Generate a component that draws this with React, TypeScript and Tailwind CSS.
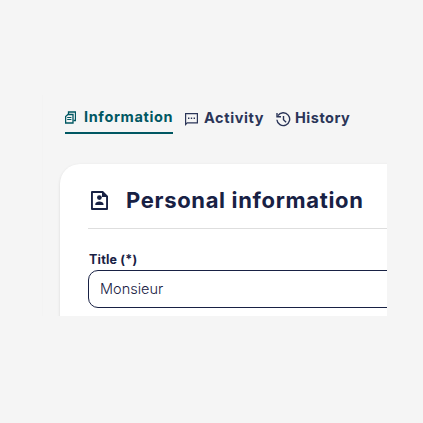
import type { ReactNode } from "react";

interface ITabProps {
  icon: ReactNode;
  label: string;
  className: string;
  labelClassName: string;
}

function CopyIcon() {
  return (
    <svg width="11" height="13" viewBox="0 0 11 13" fill="none" stroke="currentColor" className="shrink-0">
      <path d="M3.5 3V1h7v8.5h-2" strokeWidth="1.3" />
      <path d="M3 3.5h5v8.5H.6V5.5z" strokeWidth="1.3" />
      <path d="M2.2 6.5H6.4M2.2 8.5H6.4" strokeWidth="1" />
    </svg>
  );
}

function MessageIcon() {
  return (
    <svg width="13" height="13" viewBox="0 0 13 13" fill="none" stroke="currentColor" className="relative top-px shrink-0">
      <path d="M.6 11.5V.6h11.8v9.3H2.2z" strokeWidth="1.2" />
      <path d="M3 5.3h1.4M5.8 5.3h1.4M8.6 5.3H10" strokeWidth="1.4" />
    </svg>
  );
}

function HistoryIcon() {
  return (
    <svg width="15" height="15" viewBox="0 0 15 15" fill="none" stroke="currentColor" className="relative top-px shrink-0">
      <path d="M.9 7.8a6.4 6.4 0 1 0 1-4.1" strokeWidth="1.4" />
      <path d="M1 .9v3.9h4" strokeWidth="1.4" />
      <path d="M7.5 4v3.8l2.6 2.5" strokeWidth="1.4" />
    </svg>
  );
}

function ProfileIcon() {
  return (
    <svg width="17" height="19" viewBox="0 0 17 19" fill="currentColor" className="shrink-0">
      <path fillRule="evenodd" d="M0 1Q0 0 1 0H12L17 5V18Q17 19 16 19H1Q0 19 0 18ZM1.9 1.9V17.1H15.1V6H11V1.9Z" />
      <circle cx="8.4" cy="6.6" r="2.4" />
      <path d="M4.3 14v-1c0-1.7 2-2.6 4.1-2.6s4.1.9 4.1 2.6v1z" />
    </svg>
  );
}

function Tab({ icon, label, className, labelClassName }: ITabProps) {
  return (
    <li className={`flex items-center h-8 ${className}`}>
      {icon}
      <span className={`text-[14.5px] leading-5 font-bold whitespace-nowrap ${labelClassName}`}>{label}</span>
    </li>
  );
}

export default function App() {
  return (
    <main className="h-[423px] w-[423px] overflow-hidden bg-[#f5f5f5] pt-[95px] pl-[42px] font-[Inter,sans-serif] text-[#182144]">
      <div className="h-[221px] w-[345px] overflow-hidden border-l border-[#f3f3f3]">
        <ul className="flex pl-[22px] pt-[7px]">
          <Tab
            icon={<CopyIcon />}
            label="Information"
            className="w-[108px] border-b-2 border-[#005762] text-[#005762]"
            labelClassName="ml-2 tracking-[0.62px]"
          />
          <Tab
            icon={<MessageIcon />}
            label="Activity"
            className="ml-3 w-[79px] text-[#2b3558]"
            labelClassName="ml-1.5 tracking-[0.6px]"
          />
          <Tab
            icon={<HistoryIcon />}
            label="History"
            className="ml-3 text-[#2b3558]"
            labelClassName="ml-1 tracking-[0.5px]"
          />
        </ul>

        <section className="mt-[30px] ml-[17px] h-[200px] w-[400px] rounded-tl-[20px] bg-white pl-7 shadow-[0_1px_3px_rgba(0,0,0,0.12)]">
          <header className="flex h-[65px] items-center border-b border-[#dedede] pt-2 pl-[3px]">
            <ProfileIcon />
            <h1 className="ml-[18px] text-[22px] leading-7 font-bold tracking-[0.67px] whitespace-nowrap">
              Personal information
            </h1>
          </header>
          <p className="mt-[23px] pl-px text-[12.5px] leading-4 font-bold tracking-[0.2px]">Title (*)</p>
          <div className="mt-[2px] flex h-[38px] items-center rounded-[10px] border border-[#182144] pl-[11px] text-[14.5px] font-[350]">
            Monsieur
          </div>
        </section>
      </div>
    </main>
  );
}
